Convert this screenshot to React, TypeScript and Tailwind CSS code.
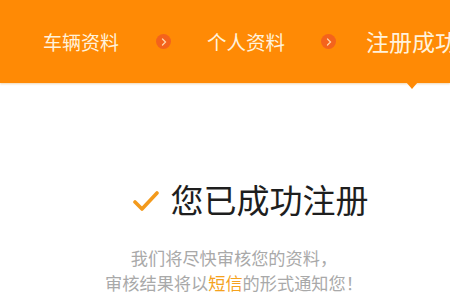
export default function App() {
  const font = { fontFamily: '"Noto Sans CJK SC", "Noto Sans", sans-serif' };
  return (
    <div className="w-[450px] h-[300px] overflow-hidden bg-white relative" style={font}>
      {/* 步骤条 */}
      <div className="h-[83px] bg-[#ff8a05] flex items-center whitespace-nowrap text-[#fff2dc] shadow-[0_1px_2px_rgba(200,120,0,0.3)]">
        <span className="ml-[43px] text-[19px] leading-none">车辆资料</span>
        <Chevron className="ml-[37px]" />
        <span className="ml-[36px] text-[19.5px] leading-none">个人资料</span>
        <Chevron className="ml-[36px]" />
        <span className="ml-[30px] text-[23px] leading-none">注册成功</span>
      </div>
      <div className="absolute left-[406px] top-[82px] w-0 h-0 border-l-[6px] border-r-[6px] border-t-[7px] border-l-transparent border-r-transparent border-t-[#ff8a05]" />

      {/* 内容 */}
      <div className="flex items-center justify-center pl-[51px] mt-[100px]">
        <svg width="26" height="22" viewBox="0 0 26 22" className="mr-[12px] mt-[2px]">
          <path d="M2 12 L9 19 L24 3" fill="none" stroke="#f39a1c" strokeWidth="3.6" strokeLinecap="round" strokeLinejoin="round" />
        </svg>
        <span className="text-[33px] leading-none text-[#1e1e1e]">您已成功注册</span>
      </div>
      <div className="mt-[29px] pl-[18px] text-center text-[17.2px] leading-[25px] text-[#a9a9a9]">
        <p>我们将尽快审核您的资料，</p>
        <p>
          审核结果将以<span className="text-[#f5a21e]">短信</span>的形式通知您！
        </p>
      </div>
    </div>
  );
}

function Chevron({ className = "" }: { className?: string }) {
  return (
    <span className={`shrink-0 w-[15px] h-[15px] rounded-full bg-[#f4631c] flex items-center justify-center ${className}`}>
      <svg width="6" height="8" viewBox="0 0 6 8">
        <path d="M1.5 1 L4.5 4 L1.5 7" fill="none" stroke="#ffd7a8" strokeWidth="1.3" strokeLinecap="round" />
      </svg>
    </span>
  );
}
